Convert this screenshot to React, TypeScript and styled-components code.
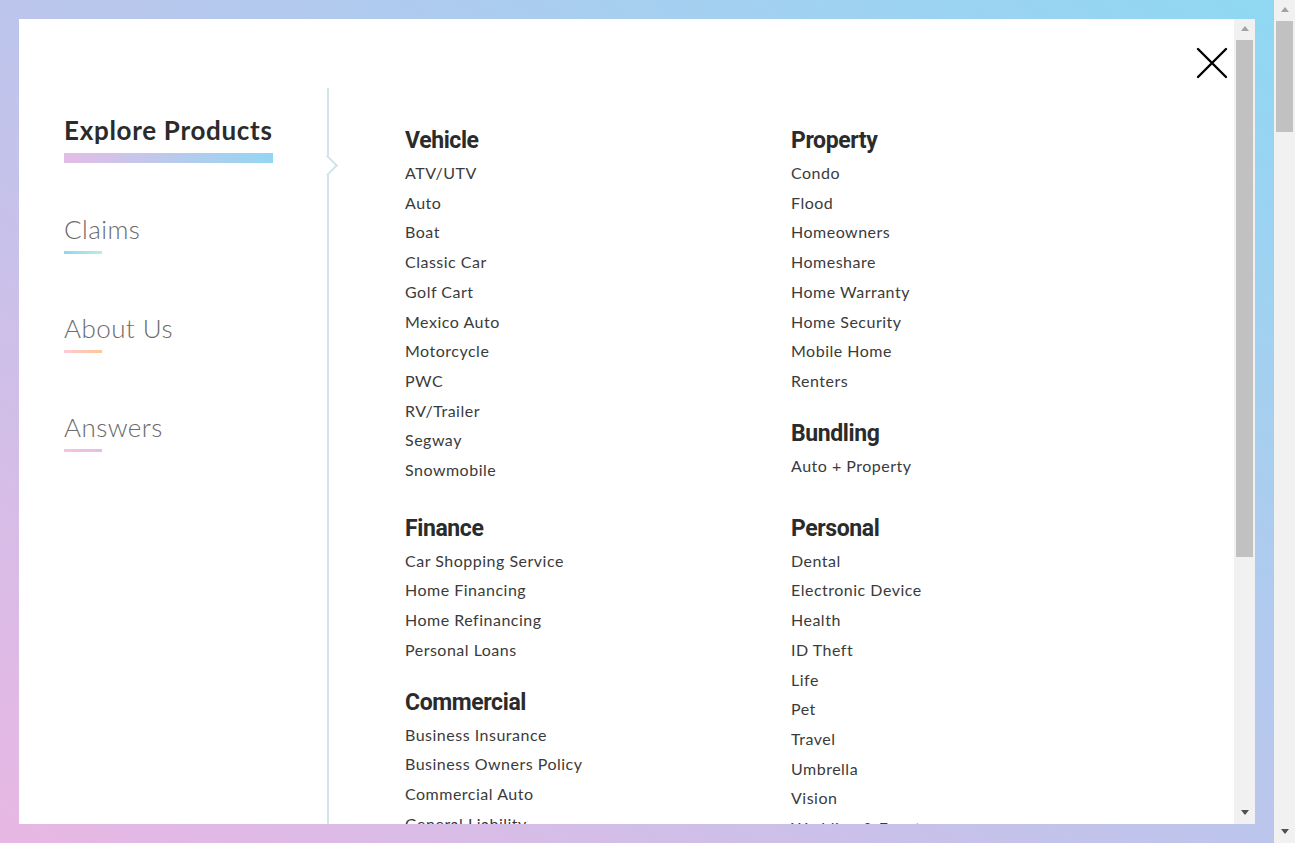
import React from "react";
import styled, { createGlobalStyle } from "styled-components";

const Global = createGlobalStyle`
  html, body { height: 100%; }
  body {
    margin: 0;
    overflow: hidden;
    font-family: Lato, "Open Sans", sans-serif;
  }
  #root { height: 100%; }
`;

const Page = styled.div`
  display: flex;
  height: 100%;
`;

const Viewport = styled.div`
  flex: 1;
  min-width: 0;
  display: flex;
  padding: 19px;
  background: linear-gradient(to top right, #e8b7e3 0%, #bcc5ec 50%, #8fd8f3 100%);
`;

const Modal = styled.div`
  flex: 1;
  min-width: 0;
  display: flex;
  background: #fff;
  overflow: hidden;
`;

const ModalBody = styled.div`
  position: relative;
  flex: 1;
  min-width: 0;
  overflow: hidden;
`;

/* scrollbar drawing */
const ScrollTrack = styled.div`
  flex: none;
  width: 21px;
  display: flex;
  flex-direction: column;
  background: #f1f1f1;
`;

const ScrollButton = styled.div`
  flex: none;
  height: 21px;
  display: flex;
  align-items: center;
  justify-content: center;
`;

const Arrow = styled.span<{ $down?: boolean }>`
  width: 0;
  height: 0;
  border-left: 4.5px solid transparent;
  border-right: 4.5px solid transparent;
  ${(p) =>
    p.$down
      ? "border-top: 5px solid #505050; margin-top: -3px;"
      : "border-bottom: 5px solid #a3a3a3; margin-top: -2px;"}
`;

const Thumb = styled.div<{ $offset: number; $size: number }>`
  flex: none;
  margin: ${(p) => p.$offset}px 2px 0;
  height: ${(p) => p.$size}px;
  background: #c1c1c1;
`;

const Spacer = styled.div`
  flex: 1;
`;

function Scrollbar({ offset, size }: { offset: number; size: number }) {
  return (
    <ScrollTrack>
      <ScrollButton>
        <Arrow />
      </ScrollButton>
      <Thumb $offset={offset} $size={size} />
      <Spacer />
      <ScrollButton>
        <Arrow $down />
      </ScrollButton>
    </ScrollTrack>
  );
}

const Inner = styled.div`
  display: flex;
  padding-top: 69px;
  min-height: 1140px;
`;

const CloseButton = styled.button`
  position: absolute;
  top: 28px;
  right: 6px;
  width: 32px;
  height: 32px;
  padding: 0;
  border: 0;
  background: transparent;
  cursor: pointer;
`;

const Nav = styled.nav`
  width: 308px;
  flex: none;
  box-sizing: border-box;
  padding: 27px 0 0 45px;
`;

const NavItem = styled.div`
  height: 99px;
`;

const NavLabel = styled.div<{ $active?: boolean }>`
  display: inline-block;
  font-size: 26px;
  line-height: 30px;
  font-weight: ${(p) => (p.$active ? 700 : 300)};
  letter-spacing: ${(p) => (p.$active ? "0.7px" : "0.45px")};
  color: ${(p) => (p.$active ? "#2b2b2b" : "#6b6b6b")};
`;

const NavBar = styled.div<{ $from: string; $to: string; $active?: boolean }>`
  margin-top: ${(p) => (p.$active ? 8 : 7)}px;
  height: ${(p) => (p.$active ? 10 : 3)}px;
  width: ${(p) => (p.$active ? "209px" : "38px")};
  background: linear-gradient(to right, ${(p) => p.$from}, ${(p) => p.$to});
`;

const Content = styled.div`
  position: relative;
  flex: 1;
  border-left: 2px solid #d3e4e7;
  padding: 36px 0 60px 76px;
`;

const Notch = styled.div`
  position: absolute;
  left: -9px;
  top: 70px;
  width: 15px;
  height: 15px;
  background: #fff;
  border-top: 2px solid #d3e4e7;
  border-right: 2px solid #d3e4e7;
  box-sizing: border-box;
  transform: rotate(45deg);
`;

const Grid = styled.div`
  display: grid;
  grid-template-columns: 386px 386px;
  row-gap: 27px;
  align-items: start;
`;

const Cell = styled.div`
  display: flex;
  flex-direction: column;
  gap: 21px;
`;

const Section = styled.section``;

const Heading = styled.h3`
  margin: 0;
  font-family: Roboto, "Open Sans", sans-serif;
  font-weight: 700;
  font-size: 23px;
  line-height: 34px;
  letter-spacing: -0.4px;
  color: #2b2b2b;
`;

const List = styled.ul`
  list-style: none;
  margin: 0;
  padding: 0;
`;

const Item = styled.li`
  font-size: 16px;
  line-height: 29.7px;
  color: #3b3b3b;
  letter-spacing: 0.5px;
`;

type Group = { title: string; items: string[] };

const grid: Group[][][] = [
  [
    [
      {
        title: "Vehicle",
        items: [
          "ATV/UTV",
          "Auto",
          "Boat",
          "Classic Car",
          "Golf Cart",
          "Mexico Auto",
          "Motorcycle",
          "PWC",
          "RV/Trailer",
          "Segway",
          "Snowmobile",
        ],
      },
    ],
    [
      {
        title: "Property",
        items: [
          "Condo",
          "Flood",
          "Homeowners",
          "Homeshare",
          "Home Warranty",
          "Home Security",
          "Mobile Home",
          "Renters",
        ],
      },
      { title: "Bundling", items: ["Auto + Property"] },
    ],
  ],
  [
    [
      {
        title: "Finance",
        items: [
          "Car Shopping Service",
          "Home Financing",
          "Home Refinancing",
          "Personal Loans",
        ],
      },
      {
        title: "Commercial",
        items: [
          "Business Insurance",
          "Business Owners Policy",
          "Commercial Auto",
          "General Liability",
          "Professional Liability",
          "Workers' Compensation",
        ],
      },
    ],
    [
      {
        title: "Personal",
        items: [
          "Dental",
          "Electronic Device",
          "Health",
          "ID Theft",
          "Life",
          "Pet",
          "Travel",
          "Umbrella",
          "Vision",
          "Wedding & Event",
        ],
      },
    ],
  ],
];

const navItems = [
  { label: "Explore Products", from: "#e3bde6", to: "#93d6f2", active: true },
  { label: "Claims", from: "#8fd6ee", to: "#b8ede6" },
  { label: "About Us", from: "#fccbd6", to: "#fdc696" },
  { label: "Answers", from: "#f6c3de", to: "#e2bde9" },
];

export default function App() {
  return (
    <>
      <Global />
      <Page>
        <Viewport>
          <Modal>
            <ModalBody>
              <CloseButton aria-label="Close">
                <svg width="32" height="32" viewBox="0 0 32 32">
                  <path
                    d="M2 2 L30 30 M30 2 L2 30"
                    stroke="#000"
                    strokeWidth="2.4"
                    strokeLinecap="round"
                    fill="none"
                  />
                </svg>
              </CloseButton>
              <Inner>
                <Nav>
                  {navItems.map((n) => (
                    <NavItem key={n.label}>
                      <NavLabel $active={n.active}>{n.label}</NavLabel>
                      <NavBar $from={n.from} $to={n.to} $active={n.active} />
                    </NavItem>
                  ))}
                </Nav>
                <Content>
                  <Notch />
                  <Grid>
                    {grid.flat().map((cell, i) => (
                      <Cell key={i}>
                        {cell.map((g) => (
                          <Section key={g.title}>
                            <Heading>{g.title}</Heading>
                            <List>
                              {g.items.map((it) => (
                                <Item key={it}>{it}</Item>
                              ))}
                            </List>
                          </Section>
                        ))}
                      </Cell>
                    ))}
                  </Grid>
                </Content>
              </Inner>
            </ModalBody>
            <Scrollbar offset={0} size={517} />
          </Modal>
        </Viewport>
        <Scrollbar offset={0} size={111} />
      </Page>
    </>
  );
}
